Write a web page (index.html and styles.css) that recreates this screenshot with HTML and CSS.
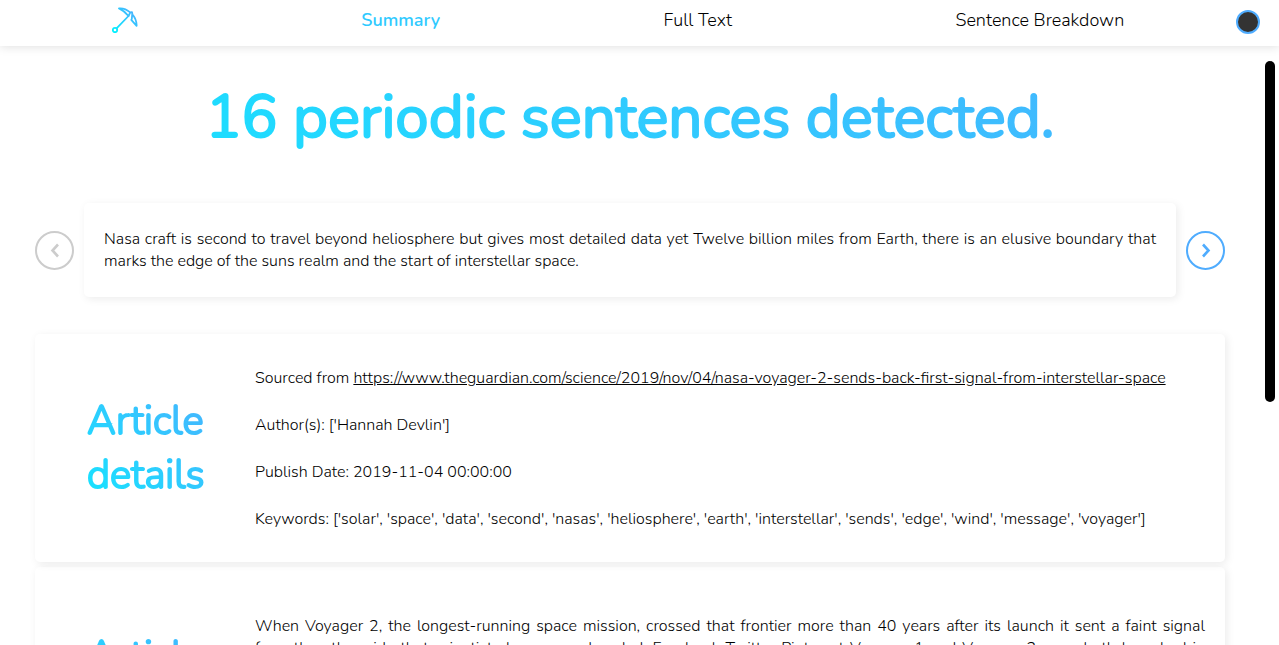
FILE: index.html
```html
<!DOCTYPE html>
<html lang="en">
<head>
<meta charset="utf-8">
<title>Periodic sentences</title>
<link rel="stylesheet" href="styles.css">
</head>
<body>
<header class="topbar">
  <nav class="nav">
    <a class="logo" href="#" aria-label="Home">
      <svg width="26" height="26" viewBox="0 0 26 26" fill="none" stroke="url(#pick)" stroke-width="1.800" stroke-linecap="round" stroke-linejoin="round">
        <defs>
          <linearGradient id="pick" gradientUnits="userSpaceOnUse" x1="1" y1="25" x2="25" y2="4">
            <stop offset="0" stop-color="#00f2fe"/>
            <stop offset="1" stop-color="#4facfe"/>
          </linearGradient>
        </defs>
        <circle cx="3" cy="23" r="2.200"/>
        <path d="M4.800 21.200 16.500 9"/>
        <path d="M7 1.400C11 1 15 2.600 18.200 5.400L20 5.200 20.400 7.200C23 10.500 24.800 14.500 24.600 18.800L19.300 12.800M7 1.400C10.500 3 14 6 16.500 9L18.200 5.600M20.200 7.200 19.800 12"/>
      </svg>
    </a>
    <a class="nav-link active" href="#summary">Summary</a>
    <a class="nav-link" href="#full-text">Full Text</a>
    <a class="nav-link" href="#breakdown">Sentence Breakdown</a>
  </nav>
  <button class="theme-toggle" type="button" aria-label="Toggle dark theme"></button>
</header>
<div class="viewport">
  <main class="content" id="summary">
    <h1 class="title gradient-text">16 periodic sentences detected.</h1>
    <section class="carousel">
      <button class="arrow" type="button" aria-label="Previous sentence" disabled>
        <svg width="10" height="16" viewBox="0 0 10 16" fill="none" stroke="currentColor" stroke-width="2.600"><path d="M8 2.500 2.500 8.500l5.500 6"/></svg>
      </button>
      <blockquote class="card quote">Nasa craft is second to travel beyond heliosphere but gives most detailed data yet Twelve billion miles from Earth, there is an elusive boundary that marks the edge of the suns realm and the start of interstellar space.</blockquote>
      <button class="arrow" type="button" aria-label="Next sentence">
        <svg width="10" height="16" viewBox="0 0 10 16" fill="none" stroke="currentColor" stroke-width="2.600"><path d="M2 2.500l5.500 6-5.500 6"/></svg>
      </button>
    </section>
    <section class="card article">
      <h2 class="heading gradient-text">Article details</h2>
      <div class="details">
        <p>Sourced from <a class="source" href="https://www.theguardian.com/science/2019/nov/04/nasa-voyager-2-sends-back-first-signal-from-interstellar-space">https://www.theguardian.com/science/2019/nov/04/nasa-voyager-2-sends-back-first-signal-from-interstellar-space</a></p>
        <p>Author(s): ['Hannah Devlin']</p>
        <p>Publish Date: 2019-11-04 00:00:00</p>
        <p>Keywords: ['solar', 'space', 'data', 'second', 'nasas', 'heliosphere', 'earth', 'interstellar', 'sends', 'edge', 'wind', 'message', 'voyager']</p>
      </div>
    </section>
    <section class="card article">
      <h2 class="heading gradient-text">Article summary</h2>
      <div class="details summary">
        <p>When Voyager 2, the longest-running space mission, crossed that frontier more than 40 years after its launch it sent a faint signal from&nbsp;the other side that scientists have now decoded. Facebook Twitter Pinterest Voyager 1 and Voyager 2 were both launched in 1977&nbsp;to&nbsp;study the outer planets of the solar system. Nasa craft is the second to travel beyond the heliosphere and gives the most detailed data yet. Twelve billion miles from Earth, there is an elusive boundary that marks the edge of the suns realm and the start of interstellar space. The solar wind creates a bubble that extends past the orbits of the planets, and the craft is now sending its message back from beyond that edge.</p>
      </div>
    </section>
  </main>
  <div class="rail"><div class="thumb"></div></div>
</div>
</body>
</html>
```

FILE: styles.css
```css
* {
  box-sizing: border-box;
}

body {
  display: flex;
  flex-direction: column;
  height: 100vh;
  margin: 0;
  overflow: hidden;
  background: #fff;
  color: #000;
  font: 300 16px/22px Nunito, "Open Sans", sans-serif;
}

.topbar {
  display: flex;
  flex: none;
  align-items: center;
  height: 46px;
  padding: 0 19px 2px 0;
  box-shadow: 0 0 10px rgba(0, 0, 0, 0.15);
}

.nav {
  display: flex;
  flex: 1;
  align-items: center;
  justify-content: space-around;
  padding-bottom: 4px;
}

.logo {
  display: flex;
}

.nav-link {
  color: #000;
  font-size: 18px;
  line-height: 24px;
  text-decoration: none;
}

.nav-link.active {
  color: #2fcaff;
  font-weight: 600;
}

.theme-toggle {
  width: 24px;
  height: 24px;
  padding: 0;
  border: 2px solid #4facfe;
  border-radius: 50%;
  background: #333;
}

.viewport {
  display: grid;
  flex: 1;
  grid-template-columns: minmax(0, 1fr) 10px;
  gap: 5px;
  min-height: 0;
  padding-right: 4px;
}

.content {
  overflow: hidden;
  padding: 30px 35px 0;
}

.gradient-text {
  background: linear-gradient(45deg, #16e4ff, #48b2fe);
  -webkit-background-clip: text;
  background-clip: text;
  color: transparent;
  font-weight: 400;
  -webkit-text-stroke: 2px transparent;
}

.title {
  margin: 0 0 45px;
  font-size: 60px;
  line-height: 82px;
  text-align: center;
}

.card {
  border-radius: 5px;
  box-shadow: 2px 2px 8px rgba(0, 0, 0, 0.08);
}

.carousel {
  display: flex;
  align-items: center;
  gap: 10px;
  margin-bottom: 37px;
}

.quote {
  flex: 1;
  margin: 0;
  padding: 25px 20px;
  text-align: justify;
}

.arrow {
  display: flex;
  flex: none;
  align-items: center;
  justify-content: center;
  width: 39px;
  height: 39px;
  padding: 0;
  border: 2px solid currentColor;
  border-radius: 50%;
  background: none;
  color: #4facfe;
}

.arrow:disabled {
  color: #ccc;
}

.article {
  display: grid;
  grid-template-columns: 220px minmax(0, 1fr);
  align-items: center;
  margin-bottom: 5px;
  padding: 8px 20px 7px 0;
}

.heading {
  margin: 0 40px 1px 52px;
  font-size: 40px;
  font-weight: 300;
  line-height: 54px;
}

.details p {
  margin: 25px 0;
}

.summary p {
  margin: 40px 0 44px;
  text-align: justify;
}

.source {
  color: inherit;
}

.thumb {
  height: 341px;
  margin-top: 15px;
  border-radius: 5px;
  background: #000;
}
```
